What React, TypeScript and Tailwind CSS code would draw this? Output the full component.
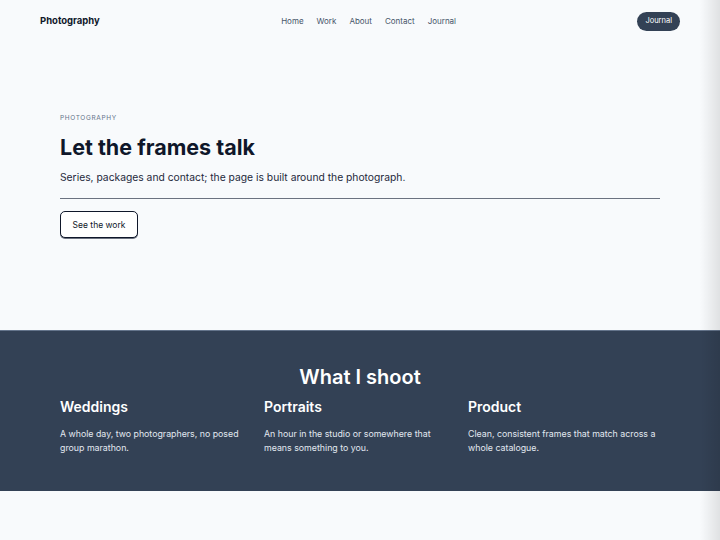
import React from 'react';

const links = ['Home', 'Work', 'About', 'Contact', 'Journal'];

const services = [
  {
    title: 'Weddings',
    text: 'A whole day, two photographers, no posed group marathon.',
  },
  {
    title: 'Portraits',
    text: 'An hour in the studio or somewhere that means something to you.',
  },
  {
    title: 'Product',
    text: 'Clean, consistent frames that match across a whole catalogue.',
  },
];

const App = () => {
  return (
    <div className="relative min-h-[540px] bg-[#f8fafc] font-['Inter',sans-serif] text-[#0f172a]">
      {/* Top bar */}
      <header className="flex h-[42px] items-center justify-between px-10">
        <span className="text-[9.5px] font-bold">Photography</span>
        <nav className="flex gap-[13px] text-[8px] text-[#475569]">
          {links.map((l) => (
            <a key={l} href="#">
              {l}
            </a>
          ))}
        </nav>
        <a
          href="#"
          className="flex h-[19px] items-center rounded-full bg-[#334155] px-[8px] text-[7.5px] text-white"
        >
          Journal
        </a>
      </header>

      {/* Hero */}
      <section className="h-[288px] px-[60px] pt-[71px]">
        <p className="text-[6.5px] leading-[10px] tracking-[0.1em] text-[#64748b]">PHOTOGRAPHY</p>
        <h1 className="mt-[11px] text-[21.5px] font-bold leading-[26px]">Let the frames talk</h1>
        <p className="mt-[10px] text-[10.3px] leading-[14px] text-[#1e293b]">
          Series, packages and contact; the page is built around the photograph.
        </p>
        <div className="mt-[14px] border-t border-[#6b7280]" />
        <button className="mt-[12px] flex h-[27px] w-[78px] items-center justify-center rounded-[5px] border border-[#0f172a] bg-white pt-px text-[8.5px] shadow-[0_1px_0_#6b7280]">
          See the work
        </button>
      </section>

      {/* Services */}
      <section className="border-t border-[#64748b] bg-[#334155] px-[60px] pb-[36px] pt-[34px] text-white">
        <h2 className="text-center text-[20px] font-semibold leading-[24px]">What I shoot</h2>
        <div className="mt-[9px] grid grid-cols-3 gap-3">
          {services.map((s) => (
            <div key={s.title}>
              <h3 className="text-[14px] font-semibold leading-[18px]">{s.title}</h3>
              <p className="mt-[11px] text-[8.8px] leading-[14px] text-[#e2e8f0]">{s.text}</p>
            </div>
          ))}
        </div>
      </section>

      {/* window edge shade */}
      <div className="pointer-events-none absolute inset-y-0 right-0 w-5 bg-gradient-to-r from-transparent to-black/10" />
    </div>
  );
};

export default App;
